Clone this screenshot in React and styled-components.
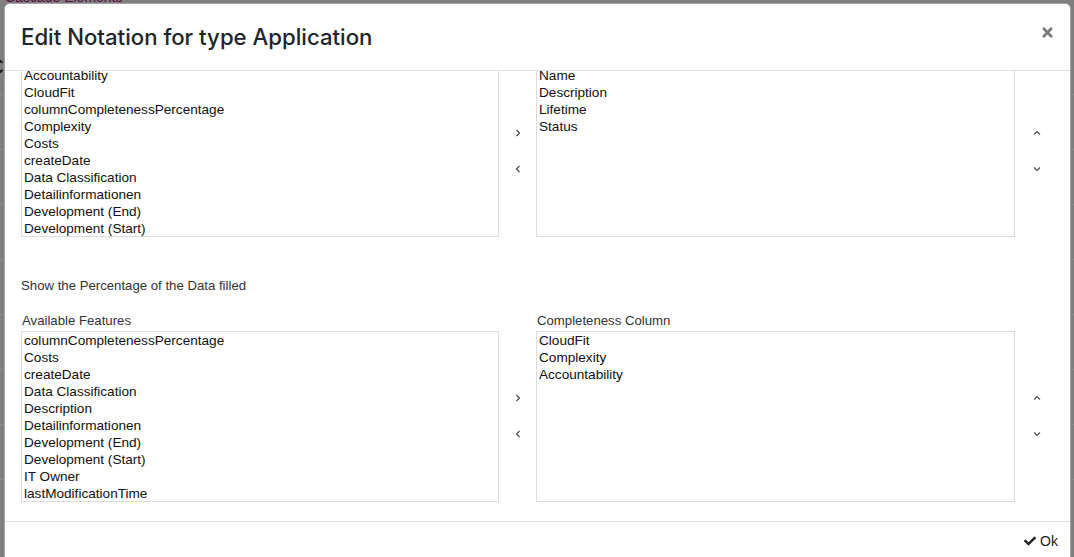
import React from "react";
import styled, { createGlobalStyle } from "styled-components";
import { FaCheck, FaTimes } from "react-icons/fa";

const GlobalStyle = createGlobalStyle`
  html, body {
    margin: 0;
    padding: 0;
    height: 100%;
    overflow: hidden;
  }
  body {
    background: #7f7f7f;
    font-family: "Liberation Sans", Arial, sans-serif;
    color: #212529;
  }
`;

const Page = styled.div`
  position: relative;
  height: 557px;
  overflow: hidden;
`;

const BackLink = styled.div`
  position: absolute;
  top: -11px;
  left: 5px;
  font-size: 14px;
  color: #5c1040;
`;

const BackLines = styled.div`
  display: flex;
  flex-direction: column;
  padding-top: 40px;
`;

const BackRow = styled.div`
  height: 54px;
  border-bottom: 1px solid #8c8c8c;
  font-size: 22px;
  color: #111;
  line-height: 54px;
  margin-left: -12px;
`;

const Modal = styled.div`
  position: absolute;
  top: 3px;
  left: 4px;
  width: 1067px;
  height: 600px;
  background: #fff;
  border: 1px solid rgba(0, 0, 0, 0.35);
  border-radius: 6px 6px 0 0;
  box-sizing: border-box;
  display: flex;
  flex-direction: column;
  overflow: hidden;
`;

const Header = styled.div`
  position: relative;
  z-index: 1;
  height: 67px;
  box-sizing: border-box;
  display: flex;
  align-items: center;
  justify-content: space-between;
  padding: 0 16px 2px 16px;
  border-bottom: 1px solid #dee2e6;
  background: #fff;
`;

const Title = styled.h4`
  margin: 0;
  font-family: Inter, "Liberation Sans", sans-serif;
  font-size: 22.2px;
  font-weight: 500;
  color: #212529;
`;

const Close = styled.button`
  border: none;
  background: none;
  padding: 0;
  margin: 0 -1px 8px 0;
  color: #7a7a7a;
  display: flex;
  cursor: pointer;
`;

const Body = styled.div`
  flex: 1;
  overflow: hidden;
  padding: 0 13px 0 16px;
`;

const Scrolled = styled.div`
  margin-top: -5px;
`;

const Row = styled.div`
  display: grid;
  grid-template-columns: 478px 37px 479px 44px;
  align-items: end;
`;

const FieldLabel = styled.div`
  font-size: 13.2px;
  color: #333;
  padding-left: 1px;
  margin-bottom: 3px;
`;

const ListBox = styled.div`
  height: 171px;
  border: 1px solid #dcdcdc;
  box-sizing: border-box;
  padding: 0 3px 0 2px;
  overflow: hidden;
`;

const Item = styled.div`
  font-size: 13.6px;
  line-height: 17px;
  height: 17px;
  color: #111;
  white-space: nowrap;
`;

const Controls = styled.div`
  height: 171px;
  display: flex;
  flex-direction: column;
  align-items: center;
  justify-content: center;
  gap: 22px;
  padding-bottom: 2px;
  box-sizing: border-box;
`;

const Arrow = styled.button`
  border: none;
  background: none;
  padding: 0;
  width: 14px;
  height: 14px;
  display: flex;
  align-items: center;
  justify-content: center;
  color: #444;
  cursor: pointer;
`;

const Hint = styled.div`
  font-size: 13.2px;
  color: #333;
  margin: 41px 0 20px 0;
`;

const Section = styled.div`
  display: flex;
  flex-direction: column;
`;

const Footer = styled.div`
  height: 38px;
  border-top: 1px solid #dee2e6;
  display: flex;
  align-items: center;
  justify-content: flex-end;
  padding: 0 12px 0 0;
  flex-shrink: 0;
  margin-bottom: 42px;
`;

const OkButton = styled.button`
  border: none;
  background: none;
  display: flex;
  align-items: center;
  gap: 4px;
  font-family: "Liberation Sans", Arial, sans-serif;
  font-size: 14px;
  color: #222;
  padding: 0;
  cursor: pointer;
`;

const Chevron = ({ dir }) => {
  const paths = {
    right: "M2.5 1 L5.5 4 L2.5 7",
    left: "M5.5 1 L2.5 4 L5.5 7",
    up: "M1 5.5 L4 2.5 L7 5.5",
    down: "M1 2.5 L4 5.5 L7 2.5",
  };
  return (
    <svg width="8" height="8" viewBox="0 0 8 8">
      <path d={paths[dir]} fill="none" stroke="currentColor" strokeWidth="1.1" />
    </svg>
  );
};

const notationAvailable = [
  "Accountability",
  "CloudFit",
  "columnCompletenessPercentage",
  "Complexity",
  "Costs",
  "createDate",
  "Data Classification",
  "Detailinformationen",
  "Development (End)",
  "Development (Start)",
];

const notationSelected = ["Name", "Description", "Lifetime", "Status"];

const featuresAvailable = [
  "columnCompletenessPercentage",
  "Costs",
  "createDate",
  "Data Classification",
  "Description",
  "Detailinformationen",
  "Development (End)",
  "Development (Start)",
  "IT Owner",
  "lastModificationTime",
];

const completeness = ["CloudFit", "Complexity", "Accountability"];

const List = ({ items }) => (
  <ListBox>
    {items.map((item) => (
      <Item key={item}>{item}</Item>
    ))}
  </ListBox>
);

const Transfer = () => (
  <Controls>
    <Arrow><Chevron dir="right" /></Arrow>
    <Arrow><Chevron dir="left" /></Arrow>
  </Controls>
);

const Order = () => (
  <Controls>
    <Arrow><Chevron dir="up" /></Arrow>
    <Arrow><Chevron dir="down" /></Arrow>
  </Controls>
);

const App = () => {
  return (
    <Page>
      <GlobalStyle />
      <BackLink>Cascade Elements</BackLink>
      <BackLines>
        {["C", "l", "", "c", "e", "s", "s", "r"].map((c, i) => (
          <BackRow key={i}>{c}</BackRow>
        ))}
      </BackLines>
      <Modal>
        <Header>
          <Title>Edit Notation for type Application</Title>
          <Close aria-label="Close">
            <FaTimes size={15} />
          </Close>
        </Header>
        <Body>
          <Scrolled>
            <Row>
              <List items={notationAvailable} />
              <Transfer />
              <List items={notationSelected} />
              <Order />
            </Row>
            <Hint>Show the Percentage of the Data filled</Hint>
            <Row>
              <Section>
                <FieldLabel>Available Features</FieldLabel>
                <List items={featuresAvailable} />
              </Section>
              <Transfer />
              <Section>
                <FieldLabel>Completeness Column</FieldLabel>
                <List items={completeness} />
              </Section>
              <Order />
            </Row>
          </Scrolled>
        </Body>
        <Footer>
          <OkButton>
            <FaCheck size={12} />
            Ok
          </OkButton>
        </Footer>
      </Modal>
    </Page>
  );
};

export default App;
